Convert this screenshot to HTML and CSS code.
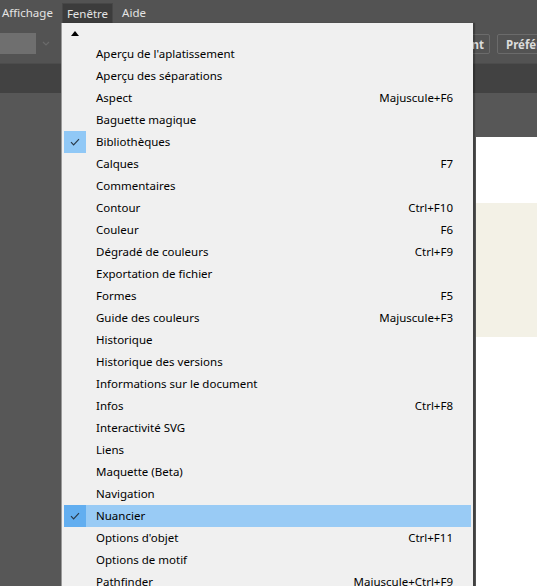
FILE: index.html
```html
<!DOCTYPE html>
<html lang="fr">
<head>
<meta charset="utf-8">
<link rel="stylesheet" href="styles.css">
</head>
<body>
<div class="app">
  <div class="menubar">
    <span class="mb-item first">Affichage</span>
    <span class="mb-item active">Fenêtre</span>
    <span class="mb-item">Aide</span>
  </div>
  <div class="toolbar">
    <div class="field"></div>
    <svg class="caret" width="8" height="5" viewBox="0 0 8 5"><path d="M1 1l3 3 3-3" fill="none" stroke="#6a6a6a" stroke-width="1.2"/></svg>
    <div class="spacer"></div>
    <div class="btn btn-a">ment</div>
    <div class="btn btn-b">Préférences</div>
  </div>
  <div class="band"></div>
  <div class="workspace">
    <div class="doc">
      <div class="cream"></div>
    </div>
  </div>

  <div class="menu">
    <div class="scroll-up"><span class="tri"></span></div>
    <ul class="items">
      <li><span class="chk"></span><span class="lbl">Aperçu de l'aplatissement</span><span class="sc"></span></li>
      <li><span class="chk"></span><span class="lbl">Aperçu des séparations</span><span class="sc"></span></li>
      <li><span class="chk"></span><span class="lbl">Aspect</span><span class="sc">Majuscule+F6</span></li>
      <li><span class="chk"></span><span class="lbl">Baguette magique</span><span class="sc"></span></li>
      <li class="checked"><span class="chk"><svg width="10" height="8" viewBox="0 0 10 8"><path d="M1 4.2l2.6 2.6L9 1.2" fill="none" stroke="#2a3a4a" stroke-width="1.2"/></svg></span><span class="lbl">Bibliothèques</span><span class="sc"></span></li>
      <li><span class="chk"></span><span class="lbl">Calques</span><span class="sc">F7</span></li>
      <li><span class="chk"></span><span class="lbl">Commentaires</span><span class="sc"></span></li>
      <li><span class="chk"></span><span class="lbl">Contour</span><span class="sc">Ctrl+F10</span></li>
      <li><span class="chk"></span><span class="lbl">Couleur</span><span class="sc">F6</span></li>
      <li><span class="chk"></span><span class="lbl">Dégradé de couleurs</span><span class="sc">Ctrl+F9</span></li>
      <li><span class="chk"></span><span class="lbl">Exportation de fichier</span><span class="sc"></span></li>
      <li><span class="chk"></span><span class="lbl">Formes</span><span class="sc">F5</span></li>
      <li><span class="chk"></span><span class="lbl">Guide des couleurs</span><span class="sc">Majuscule+F3</span></li>
      <li><span class="chk"></span><span class="lbl">Historique</span><span class="sc"></span></li>
      <li><span class="chk"></span><span class="lbl">Historique des versions</span><span class="sc"></span></li>
      <li><span class="chk"></span><span class="lbl">Informations sur le document</span><span class="sc"></span></li>
      <li><span class="chk"></span><span class="lbl">Infos</span><span class="sc">Ctrl+F8</span></li>
      <li><span class="chk"></span><span class="lbl">Interactivité SVG</span><span class="sc"></span></li>
      <li><span class="chk"></span><span class="lbl">Liens</span><span class="sc"></span></li>
      <li><span class="chk"></span><span class="lbl">Maquette (Beta)</span><span class="sc"></span></li>
      <li><span class="chk"></span><span class="lbl">Navigation</span><span class="sc"></span></li>
      <li class="checked hover"><span class="chk"><svg width="10" height="8" viewBox="0 0 10 8"><path d="M1 4.2l2.6 2.6L9 1.2" fill="none" stroke="#2a3a4a" stroke-width="1.2"/></svg></span><span class="lbl">Nuancier</span><span class="sc"></span></li>
      <li><span class="chk"></span><span class="lbl">Options d'objet</span><span class="sc">Ctrl+F11</span></li>
      <li><span class="chk"></span><span class="lbl">Options de motif</span><span class="sc"></span></li>
      <li><span class="chk"></span><span class="lbl">Pathfinder</span><span class="sc">Majuscule+Ctrl+F9</span></li>
    </ul>
  </div>
</div>
</body>
</html>
```

FILE: styles.css
```css
html, body {
  margin: 0;
  padding: 0;
}
body {
  width: 537px;
  height: 586px;
  overflow: hidden;
  background: #535353;
  font-family: "Segoe UI", "Noto Sans", "Liberation Sans", sans-serif;
}
.app {
  position: relative;
  width: 537px;
  height: 586px;
  overflow: hidden;
  display: flex;
  flex-direction: column;
}
.menubar {
  height: 23px;
  display: flex;
  align-items: flex-end;
  gap: 3px;
  padding-left: 2px;
  background: #535353;
  box-sizing: border-box;
}
.mb-item {
  color: #e4e4e4;
  font-size: 11.5px;
  line-height: 20px;
  height: 20px;
  padding: 0 6px;
  box-sizing: border-box;
}
.mb-item.first {
  padding-left: 0;
}
.mb-item.active {
  background: #3c3c3c;
  border: 1px solid #474747;
  border-bottom: none;
  padding: 0 4px;
  line-height: 19px;
}
.toolbar {
  height: 40px;
  display: flex;
  align-items: center;
  background: #535353;
}
.field {
  width: 36px;
  height: 21px;
  background: #6f6f6f;
  margin-top: 1px;
}
.caret {
  margin-left: 6px;
}
.spacer {
  flex: 1;
}
.btn {
  height: 20px;
  border: 1px solid #6b6b6b;
  border-radius: 2px;
  color: #dcdcdc;
  font-size: 11.5px;
  font-weight: bold;
  line-height: 20px;
  white-space: nowrap;
  margin-top: 1px;
  flex: none;
  overflow: hidden;
}
.btn-a {
  width: 60px;
  text-align: right;
  padding: 0 5px;
  box-sizing: border-box;
  margin-right: 7px;
}
.btn-b {
  width: 80px;
  box-sizing: border-box;
  padding: 0 8px;
  margin-right: -40px;
}
.band {
  height: 30px;
  background: #424242;
  border-top: 1px solid #4c4c4c;
  box-sizing: border-box;
}
.workspace {
  flex: 1;
  background: #575757;
  display: flex;
  justify-content: flex-end;
  padding-top: 44px;
}
.doc {
  width: 61px;
  background: #ffffff;
  padding-top: 66px;
}
.cream {
  height: 134px;
  background: #f3f1e6;
}
.menu {
  position: absolute;
  left: 61px;
  top: 23px;
  width: 412px;
  height: 570px;
  background: #f0f0f0;
  border-left: 1px solid #9a9a9a;
  box-shadow: 2px 0 1px rgba(0,0,0,0.25);
  box-sizing: border-box;
  padding: 0 2px;
  overflow: hidden;
}
.scroll-up {
  height: 20px;
  position: relative;
}
.tri {
  position: absolute;
  left: 7px;
  top: 8px;
  width: 0;
  height: 0;
  border-left: 4.5px solid transparent;
  border-right: 4.5px solid transparent;
  border-bottom: 5px solid #000;
}
.items {
  list-style: none;
  margin: 0;
  padding: 0;
}
.items li {
  height: 22px;
  display: flex;
  align-items: center;
  font-size: 11.5px;
  color: #000;
}
.chk {
  width: 22px;
  height: 22px;
  display: flex;
  align-items: center;
  justify-content: center;
  margin-right: 10px;
}
.lbl {
  flex: 1;
  white-space: nowrap;
  line-height: 22px;
  margin-top: -1px;
}
.sc {
  padding-right: 18px;
  white-space: nowrap;
  line-height: 22px;
  margin-top: -1px;
}
.checked .chk {
  background: #90c8f6;
}
.hover {
  background: #99cbf5;
}
.hover .chk {
  background: #62aef0;
}
```
